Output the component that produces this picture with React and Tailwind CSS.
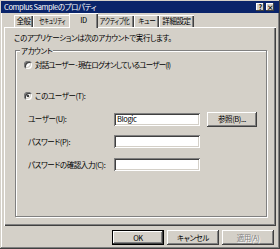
const F = "[font-family:'Noto_Sans_CJK_JP','Liberation_Sans',sans-serif]";

function Radio({ checked }) {
  return (
    <span className="relative inline-block w-[8px] h-[8px] rounded-full bg-white shadow-[inset_1px_1px_#808080,inset_-1px_-1px_#fff,inset_2px_2px_#404040,inset_-2px_-2px_#d4d0c8] shrink-0">
      {checked && <span className="absolute left-[3px] top-[3px] w-[2px] h-[2px] rounded-full bg-black" />}
    </span>
  );
}

function Input({ value }) {
  return (
    <div className="w-[86px] h-[13px] bg-white shadow-[inset_1px_1px_#808080,inset_-1px_-1px_#fff,inset_2px_2px_#404040,inset_-2px_-2px_#d4d0c8] flex items-center pl-[3px] text-[7.5px] leading-none text-black">
      {value}
    </div>
  );
}

function Btn({ children, w = "w-[52px]", disabled, def }) {
  return (
    <div className={`${w} h-[15px] flex items-center justify-center whitespace-nowrap text-[7.5px] leading-none ${disabled ? "text-[#808080] [text-shadow:1px_1px_#fff]" : "text-black"} ${def ? "shadow-[inset_-1px_-1px_#000,inset_1px_1px_#000,inset_-2px_-2px_#404040,inset_2px_2px_#fff,inset_-3px_-3px_#808080]" : "shadow-[inset_-1px_-1px_#404040,inset_1px_1px_#fff,inset_-2px_-2px_#808080,inset_2px_2px_#d4d0c8]"}`}>
      {children}
    </div>
  );
}

function Tab({ children, selected, w, sx = "" }) {
  const label = <span className={`inline-block whitespace-nowrap ${sx}`}>{children}</span>;
  if (selected) {
    return (
      <div className={`${w} h-[15px] relative z-10 -mx-[2px] -mb-[1px] bg-[#d4d0c8] flex items-center justify-center pb-[2px] shadow-[inset_1px_1px_#fff,inset_-1px_0_#404040,inset_-2px_0_#808080]`}>
        {label}
      </div>
    );
  }
  return (
    <div className={`${w} h-[12px] flex items-center justify-center shadow-[inset_1px_1px_#fff,inset_-1px_0_#404040,inset_-2px_0_#808080]`}>
      {label}
    </div>
  );
}

export default function App() {
  return (
    <div className={`w-[280px] h-[249px] bg-[#d4d0c8] flex flex-col p-[1px] text-black ${F} [font-feature-settings:'palt'] tracking-[-0.4px] shadow-[inset_-1px_-1px_#404040,inset_1px_1px_#d4d0c8,inset_-2px_-2px_#808080,inset_2px_2px_#fff]`}>
      {/* title bar */}
      <div className="h-[12px] bg-[#0a246a] flex items-center pl-[3px] pr-[5px] text-white text-[7.5px] leading-none">
        <span className="flex-1">Complus Sampleのプロパティ</span>
        <div className="flex gap-[2px]">
          <div className="w-[8px] h-[8px] bg-[#d4d0c8] text-black text-[7px] leading-none flex items-center justify-center font-bold shadow-[inset_-1px_-1px_#404040,inset_1px_1px_#fff]">?</div>
          <div className="w-[8px] h-[8px] bg-[#d4d0c8] text-black text-[7px] leading-none flex items-center justify-center font-bold shadow-[inset_-1px_-1px_#404040,inset_1px_1px_#fff]">×</div>
        </div>
      </div>
      {/* tabs */}
      <div className="h-[14px] flex items-end pl-[13px] text-[7.5px] leading-none">
        <Tab w="w-[19px]">全般</Tab>
        <Tab w="w-[38px]" sx="scale-x-[0.72]">セキュリティ</Tab>
        <Tab w="w-[29px]" selected>ID</Tab>
        <Tab w="w-[38px]" sx="scale-x-[0.8]">アクティブ化</Tab>
        <Tab w="w-[25px]" sx="scale-x-[0.88]">キュー</Tab>
        <Tab w="w-[35px]">詳細設定</Tab>
      </div>
      {/* panel */}
      <div className="mx-[3px] h-[199px] flex flex-col shadow-[inset_1px_1px_#fff,inset_-1px_-1px_#404040,inset_-2px_-2px_#808080] text-[7.5px] leading-none">
        <div className="pl-[10px] pt-[7px] h-[18px]">このアプリケーションは次のアカウントで実行します。</div>
        <div className="relative ml-[11px] mr-[9px] mt-[5px] h-[167px] border border-[#808080] shadow-[1px_1px_0_#fff,inset_1px_1px_0_#fff]">
          <span className="absolute -top-[4px] left-[4px] px-[1px] bg-[#d4d0c8]">アカウント</span>
          <div className="flex flex-col pl-[8px] pt-[10px]">
            <div className="flex items-center gap-[3px] h-[8px]">
              <Radio />
              <span className="tracking-[-0.8px]">対話ユーザー - 現在ログオンしているユーザー(I)</span>
            </div>
            <div className="flex items-center gap-[3px] h-[8px] mt-[23px]">
              <Radio checked />
              <span>このユーザー(T):</span>
            </div>
            <div className="flex items-center h-[14px] mt-[12px] pl-[4px]">
              <span className="w-[86px]">ユーザー(U):</span>
              <Input value="Blogic" />
              <div className="ml-[7px]"><Btn w="w-[50px]">参照(B)...</Btn></div>
            </div>
            <div className="flex items-center h-[13px] mt-[9px] pl-[4px]">
              <span className="w-[86px]">パスワード(P):</span>
              <Input />
            </div>
            <div className="flex items-center h-[13px] mt-[10px] pl-[4px]">
              <span className="w-[86px]">パスワードの確認入力(C):</span>
              <Input />
            </div>
          </div>
        </div>
      </div>
      {/* buttons */}
      <div className="flex justify-end gap-[3px] pr-[5px] mt-[4px]">
        <Btn def>OK</Btn>
        <Btn>キャンセル</Btn>
        <Btn disabled>適用(A)</Btn>
      </div>
    </div>
  );
}
